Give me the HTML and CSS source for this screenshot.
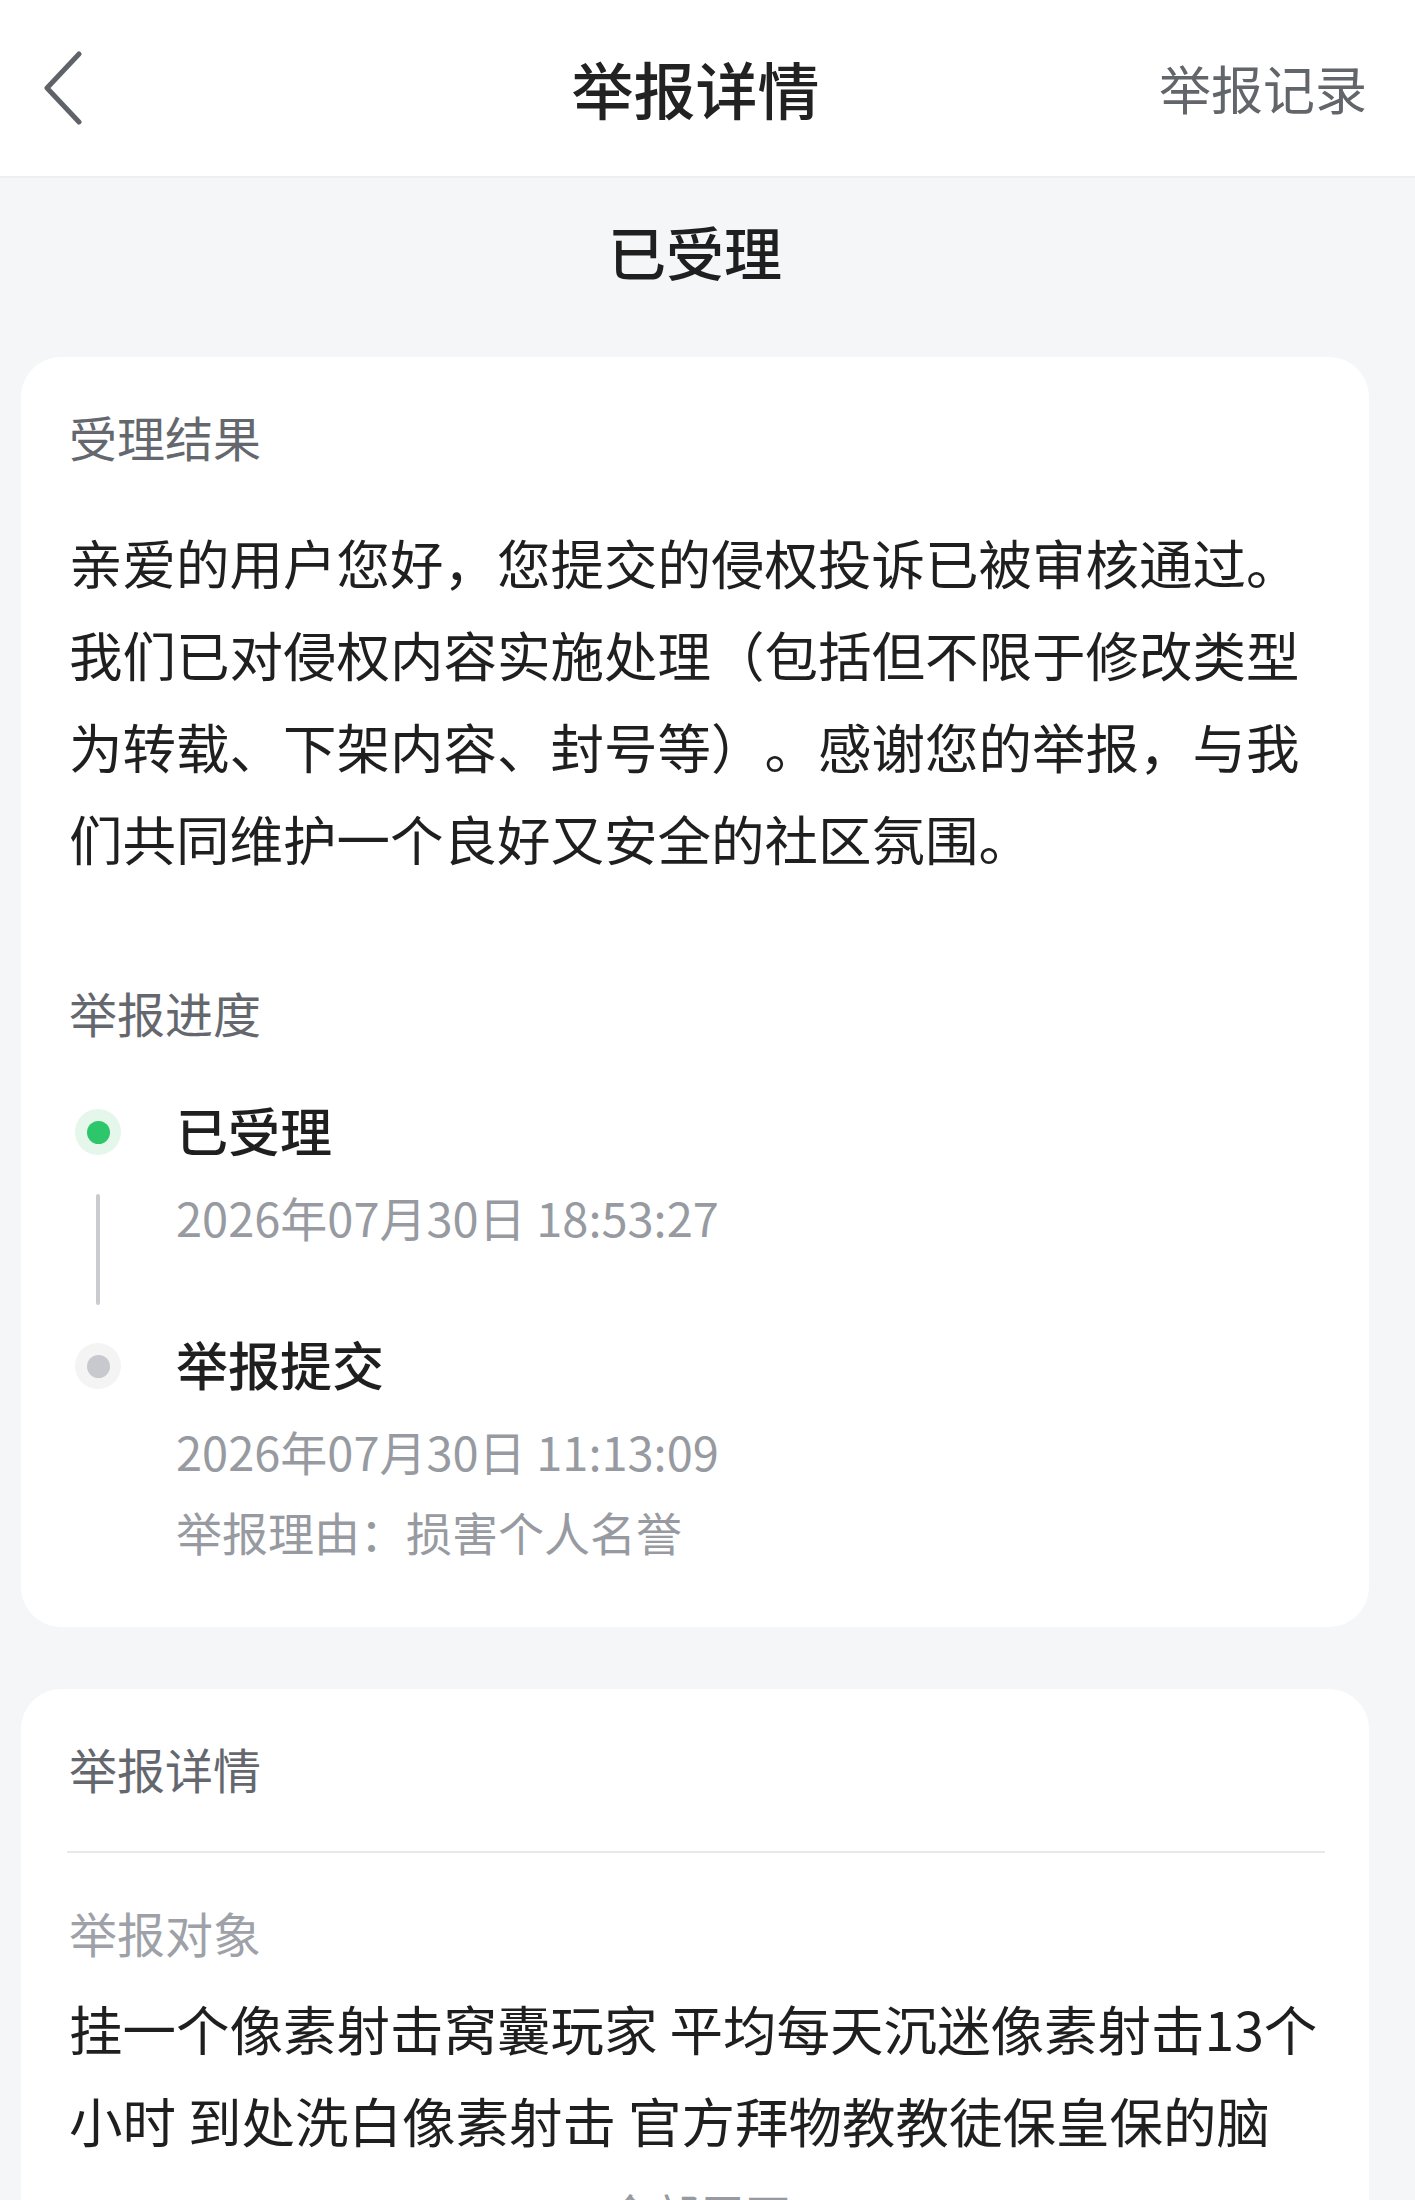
FILE: index.html
```html
<!DOCTYPE html>
<html lang="zh-CN">
<head>
<meta charset="utf-8">
<title>举报详情</title>
<link rel="stylesheet" href="styles.css">
</head>
<body>
<header class="topbar">
  <div class="back">
    <svg class="back-icon" width="40" height="76" viewBox="0 0 40 76" aria-hidden="true">
      <path d="M35 4 L3 38 L35 72" fill="none" stroke="#5f6368" stroke-width="5" stroke-linecap="round" stroke-linejoin="round"/>
    </svg>
  </div>
  <h1 class="title">举报详情</h1>
  <div class="records">举报记录</div>
</header>

<main class="main">
  <div class="status">已受理</div>

  <section class="card">
    <div class="label">受理结果</div>
    <p class="body-text">亲爱的用户您好，您提交的侵权投诉已被审核通过。我们已对侵权内容实施处理（包括但不限于修改类型为转载、下架内容、封号等）。感谢您的举报，与我们共同维护一个良好又安全的社区氛围。</p>

    <div class="label label-progress">举报进度</div>
    <div class="timeline">
      <div class="tl-item tl-first">
        <div class="tl-rail">
          <span class="tl-dot dot-green"></span>
          <span class="tl-line"></span>
        </div>
        <div class="tl-content">
          <div class="tl-title">已受理</div>
          <div class="tl-time">2026年07月30日 18:53:27</div>
        </div>
      </div>
      <div class="tl-item">
        <div class="tl-rail">
          <span class="tl-dot dot-gray"></span>
        </div>
        <div class="tl-content">
          <div class="tl-title">举报提交</div>
          <div class="tl-time">2026年07月30日 11:13:09</div>
          <div class="tl-reason">举报理由：损害个人名誉</div>
        </div>
      </div>
    </div>
  </section>

  <section class="card card-detail">
    <div class="label">举报详情</div>
    <div class="divider"></div>
    <div class="label label-light">举报对象</div>
    <p class="body-text object-text">挂一个像素射击窝囊玩家 平均每天沉迷像素射击13个小时 到处洗白像素射击 官方拜物教教徒保皇保的脑</p>
    <div class="expand">全部展开</div>
  </section>
</main>
</body>
</html>
```

FILE: styles.css
```css
html, body {
  margin: 0;
  padding: 0;
}

body {
  width: 1415px;
  min-height: 2200px;
  background: #f5f6f8;
  font-family: "Noto Sans CJK SC", "Noto Sans", sans-serif;
  color: #1f1f1f;
  text-spacing-trim: space-all;
  font-kerning: none;
}

.topbar {
  height: 176px;
  background: #ffffff;
  border-bottom: 2px solid #eeeff1;
  display: grid;
  grid-template-columns: 1fr auto 1fr;
  align-items: center;
  padding-right: 24px;
}

.back {
  padding-left: 44px;
  display: flex;
  align-items: center;
}

.back-icon {
  display: block;
}

.title {
  margin: 0;
  font-size: 62px;
  line-height: 80px;
  font-weight: 500;
  color: #222222;
  text-align: center;
}

.records {
  justify-self: end;
  padding-right: 24px;
  font-size: 52px;
  line-height: 70px;
  color: #62666b;
}

.main {
  padding: 0 46px 0 21px;
}

.status {
  padding-top: 40px;
  margin-bottom: 73px;
  font-size: 58px;
  line-height: 66px;
  font-weight: 500;
  color: #1f1f1f;
  text-align: center;
}

.card {
  background: #ffffff;
  border-radius: 40px;
  padding: 46px 40px 63px 48px;
}

.card-detail {
  margin-top: 62px;
  padding-bottom: 40px;
  min-height: 560px;
}

.label {
  font-size: 48px;
  line-height: 66px;
  color: #64686e;
}

.label-progress {
  margin-top: 95px;
}

.label-light {
  margin-top: 46px;
  color: #9ea2a8;
}

.body-text {
  margin: 47px 0 0 0;
  font-size: 53.5px;
  line-height: 92px;
  color: #1f1f1f;
}

.object-text {
  margin-top: 17px;
}

.timeline {
  margin-top: 52px;
}

.tl-item {
  display: flex;
}

.tl-rail {
  width: 58px;
  flex: none;
  display: flex;
  flex-direction: column;
  align-items: center;
  margin-right: 49px;
}

.tl-dot {
  width: 46px;
  height: 46px;
  margin-top: 12px;
  border-radius: 50%;
  flex: none;
  display: flex;
  align-items: center;
  justify-content: center;
}

.tl-dot::after {
  content: "";
  width: 23px;
  height: 23px;
  border-radius: 50%;
}

.dot-green {
  background: #e4f7ea;
}

.dot-green::after {
  background: #2dc66b;
}

.dot-gray {
  background: #f4f4f5;
}

.dot-gray::after {
  background: #c8c9ce;
}

.tl-line {
  flex: 1;
  width: 4px;
  margin: 39px 0 26px;
  border-radius: 2px;
  background: #c9cbcf;
}

.tl-first .tl-content {
  padding-bottom: 81px;
}

.tl-title {
  font-size: 52px;
  line-height: 66px;
  font-weight: 500;
  color: #1f1f1f;
}

.tl-time {
  margin-top: 21px;
  font-size: 47px;
  line-height: 66px;
  color: #979ba1;
}

.tl-reason {
  margin-top: 14px;
  font-size: 46px;
  line-height: 66px;
  color: #979ba1;
}

.divider {
  height: 2px;
  margin: 50px 0 0 -2px;
  width: 1258px;
  background: #e8e9eb;
}

.expand {
  margin-top: 14px;
  font-size: 46px;
  line-height: 66px;
  color: #979ba1;
  text-align: center;
}
```
